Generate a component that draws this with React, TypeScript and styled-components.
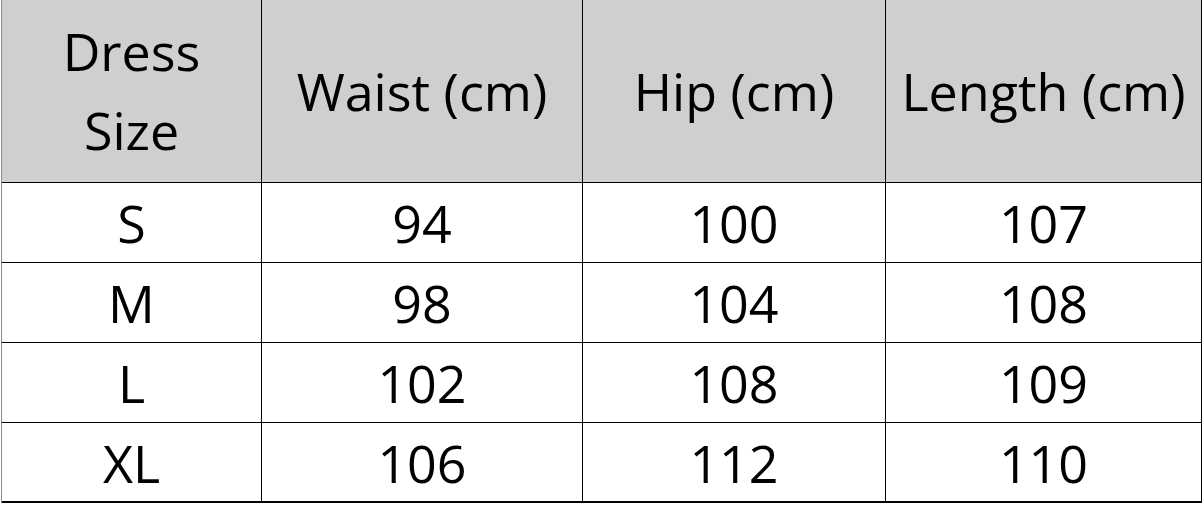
import React from 'react';
import styled, { createGlobalStyle } from 'styled-components';

const GlobalStyle = createGlobalStyle`
  html, body {
    margin: 0;
    padding: 0;
    background: #ffffff;
  }
`;

interface SizeRow {
  size: string;
  waist: number;
  hip: number;
  length: number;
}

const rows: SizeRow[] = [
  { size: 'S', waist: 94, hip: 100, length: 107 },
  { size: 'M', waist: 98, hip: 104, length: 108 },
  { size: 'L', waist: 102, hip: 108, length: 109 },
  { size: 'XL', waist: 106, hip: 112, length: 110 },
];

const Chart = styled.div`
  display: grid;
  grid-template-columns: 260px 321px 303px 316px;
  grid-template-rows: 183px repeat(4, 80px);
  width: 1201px;
  margin-left: 1px;
  border-left: 1px solid #8c8c8c;
  font-family: 'Open Sans', 'Noto Sans', sans-serif;
  color: #000000;
`;

const Cell = styled.div<{ $header?: boolean; $last?: boolean }>`
  display: flex;
  align-items: center;
  justify-content: center;
  text-align: center;
  box-sizing: border-box;
  background: ${(p) => (p.$header ? '#d0cece' : '#ffffff')};
  border-right: 1px solid #000000;
  border-bottom: ${(p) => (p.$last ? '2px' : '1px')} solid #000000;
  font-size: 52px;
  line-height: 79px;
  padding-bottom: ${(p) => (p.$header ? '2px' : '0')};
`;

const App: React.FC = () => {
  return (
    <>
      <GlobalStyle />
      <Chart>
        <Cell $header>
          Dress
          <br />
          Size
        </Cell>
        <Cell $header>Waist (cm)</Cell>
        <Cell $header>Hip (cm)</Cell>
        <Cell $header>Length (cm)</Cell>
        {rows.map((r, i) => {
          const last = i === rows.length - 1;
          return (
            <React.Fragment key={r.size}>
              <Cell $last={last}>{r.size}</Cell>
              <Cell $last={last}>{r.waist}</Cell>
              <Cell $last={last}>{r.hip}</Cell>
              <Cell $last={last}>{r.length}</Cell>
            </React.Fragment>
          );
        })}
      </Chart>
    </>
  );
};

export default App;
